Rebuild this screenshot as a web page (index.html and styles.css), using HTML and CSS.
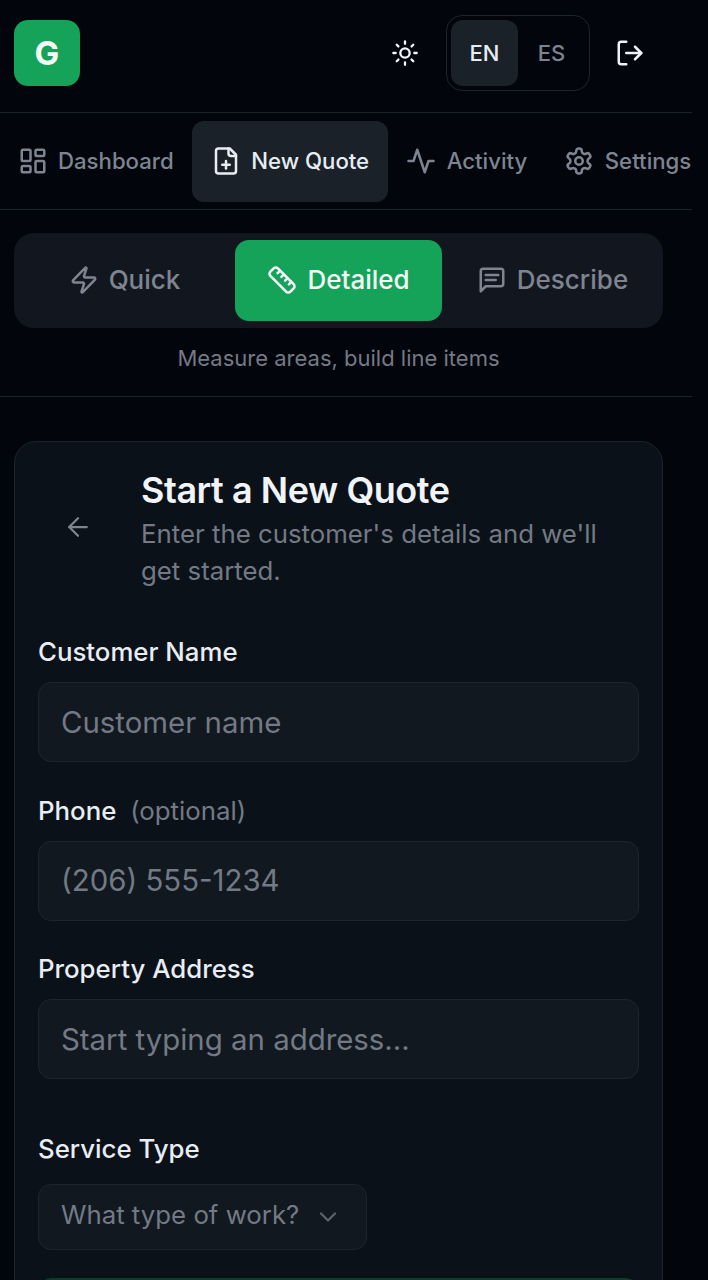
FILE: index.html
```html
<!DOCTYPE html>
<html lang="en">
<head>
<meta charset="utf-8">
<title>New Quote</title>
<link rel="stylesheet" href="styles.css">
</head>
<body>
<div class="page">
  <header class="header">
    <div class="logo">G</div>
    <div class="header-actions">
      <svg class="icon sun" viewBox="0 0 24 24"><circle cx="12" cy="12" r="4"/><path d="M12 2v2M12 20v2M4.93 4.93l1.41 1.41M17.66 17.66l1.41 1.41M2 12h2M20 12h2M6.34 17.66l-1.41 1.41M19.07 4.93l-1.41 1.41"/></svg>
      <div class="lang">
        <span class="lang-btn lang-on">EN</span>
        <span class="lang-btn">ES</span>
      </div>
      <svg class="icon logout" viewBox="0 0 24 24"><path d="M9 21H5a2 2 0 0 1-2-2V5a2 2 0 0 1 2-2h4"/><path d="m16 17 5-5-5-5"/><path d="M21 12H9"/></svg>
    </div>
  </header>
  <nav class="nav">
    <a class="nav-item"><svg class="icon" viewBox="0 0 24 24"><rect x="3" y="3" width="7" height="9" rx="1"/><rect x="14" y="3" width="7" height="5" rx="1"/><rect x="14" y="12" width="7" height="9" rx="1"/><rect x="3" y="16" width="7" height="5" rx="1"/></svg>Dashboard</a>
    <a class="nav-item nav-on"><svg class="icon" viewBox="0 0 24 24"><path d="M15 2H6a2 2 0 0 0-2 2v16a2 2 0 0 0 2 2h12a2 2 0 0 0 2-2V7Z"/><path d="M14 2v4a2 2 0 0 0 2 2h4"/><path d="M9 15h6"/><path d="M12 18v-6"/></svg>New Quote</a>
    <a class="nav-item"><svg class="icon" viewBox="0 0 24 24"><path d="M22 12h-4l-3 9L9 3l-3 9H2"/></svg>Activity</a>
    <a class="nav-item"><svg class="icon" viewBox="0 0 24 24"><path d="M12.22 2h-.44a2 2 0 0 0-2 2v.18a2 2 0 0 1-1 1.73l-.43.25a2 2 0 0 1-2 0l-.15-.08a2 2 0 0 0-2.73.73l-.22.38a2 2 0 0 0 .73 2.73l.15.1a2 2 0 0 1 1 1.72v.51a2 2 0 0 1-1 1.74l-.15.09a2 2 0 0 0-.73 2.73l.22.38a2 2 0 0 0 2.73.73l.15-.08a2 2 0 0 1 2 0l.43.25a2 2 0 0 1 1 1.73V20a2 2 0 0 0 2 2h.44a2 2 0 0 0 2-2v-.18a2 2 0 0 1 1-1.73l.43-.25a2 2 0 0 1 2 0l.15.08a2 2 0 0 0 2.73-.73l.22-.39a2 2 0 0 0-.73-2.73l-.15-.08a2 2 0 0 1-1-1.74v-.5a2 2 0 0 1 1-1.74l.15-.09a2 2 0 0 0 .73-2.73l-.22-.38a2 2 0 0 0-2.73-.73l-.15.08a2 2 0 0 1-2 0l-.43-.25a2 2 0 0 1-1-1.73V4a2 2 0 0 0-2-2z"/><circle cx="12" cy="12" r="3"/></svg>Settings</a>
  </nav>
  <section class="modes">
    <div class="mode-bar">
      <button class="mode"><svg class="icon" viewBox="0 0 24 24"><path d="M4 14a1 1 0 0 1-.78-1.63l9.9-10.2a.5.5 0 0 1 .86.46l-1.92 6.02A1 1 0 0 0 13 10h7a1 1 0 0 1 .78 1.63l-9.9 10.2a.5.5 0 0 1-.86-.46l1.92-6.02A1 1 0 0 0 11 14z"/></svg>Quick</button>
      <button class="mode mode-on"><svg class="icon" viewBox="0 0 24 24"><path d="M21.3 15.3a2.4 2.4 0 0 1 0 3.4l-2.6 2.6a2.4 2.4 0 0 1-3.4 0L2.7 8.7a2.41 2.41 0 0 1 0-3.4l2.6-2.6a2.41 2.41 0 0 1 3.4 0Z"/><path d="m14.5 12.5 2-2"/><path d="m11.5 9.5 2-2"/><path d="m8.5 6.5 2-2"/><path d="m17.5 15.5 2-2"/></svg>Detailed</button>
      <button class="mode"><svg class="icon" viewBox="0 0 24 24"><path d="M21 15a2 2 0 0 1-2 2H7l-4 4V5a2 2 0 0 1 2-2h14a2 2 0 0 1 2 2z"/><path d="M7 8h10M7 12h8"/></svg>Describe</button>
    </div>
    <p class="mode-note">Measure areas, build line items</p>
  </section>
  <main class="main">
    <div class="card">
      <div class="card-head">
        <svg class="icon back" viewBox="0 0 24 24"><path d="m12 19-7-7 7-7"/><path d="M19 12H5"/></svg>
        <div>
          <h1 class="title">Start a New Quote</h1>
          <p class="sub">Enter the customer's details and we'll get started.</p>
        </div>
      </div>
      <div class="field">
        <label class="label">Customer Name</label>
        <div class="input">Customer name</div>
      </div>
      <div class="field">
        <label class="label">Phone <span class="opt">(optional)</span></label>
        <div class="input">(206) 555-1234</div>
      </div>
      <div class="field">
        <label class="label">Property Address</label>
        <div class="input">Start typing an address...</div>
      </div>
      <div class="field field-service">
        <label class="label label-service">Service Type</label>
        <div class="select">What type of work?<svg class="icon chev" viewBox="0 0 24 24"><path d="m6 9 6 6 6-6"/></svg></div>
      </div>
      <div class="submit"></div>
    </div>
  </main>
</div>
</body>
</html>
```
FILE: styles.css
```css
* { box-sizing: border-box; }
html, body { margin: 0; padding: 0; height: 1280px; overflow: hidden; background: #02050c; }
body { font-family: Inter, "Liberation Sans", sans-serif; color: #e8edf4; }
.page { width: 692px; }
.icon { width: 30px; height: 30px; fill: none; stroke: currentColor; stroke-width: 2; stroke-linecap: round; stroke-linejoin: round; flex: none; }

.header { height: 113px; border-bottom: 1px solid #1c2229; padding: 15px 14px 0; display: flex; justify-content: space-between; align-items: flex-start; }
.logo { margin-top: 5px; width: 66px; height: 66px; border-radius: 14px; background: #14a359; color: #f4fbf6; font-weight: 700; font-size: 33px; display: flex; align-items: center; justify-content: center; }
.header-actions { display: flex; align-items: center; height: 76px; margin-right: 33px; }
.sun { width: 28px; height: 28px; color: #f3f5f8; margin-right: 27px; }
.lang { width: 144px; height: 76px; border: 1px solid #1e242c; border-radius: 16px; padding: 4px; display: flex; }
.lang-btn { width: 67px; height: 66px; border-radius: 12px; display: flex; align-items: center; justify-content: center; font-size: 22px; font-weight: 500; color: #7c8490; }
.lang-on { background: #1a2129; color: #e8edf4; }
.logout { margin-left: 25px; color: #eef1f5; }

.nav { height: 97px; border-bottom: 1px solid #1c2229; padding-top: 8px; display: flex; align-items: flex-start; overflow: hidden; white-space: nowrap; }
.nav-item { height: 81px; padding: 0 18.5px 2px; display: flex; align-items: center; gap: 10.5px; font-size: 22.2px; font-weight: 500; color: #7e8591; border-radius: 12px; flex: none; }
.nav-item:first-child { padding-left: 17.5px; }
.nav-on { background: #1a2129; color: #e8edf4; }

.modes { height: 187px; border-bottom: 1px solid #1c2229; padding: 23px 29px 0 14px; }
.mode-bar { height: 95px; border-radius: 20px; background: #12171f; padding: 7px; display: grid; grid-template-columns: repeat(3, 1fr); gap: 7px; align-items: start; }
.mode { height: 81px; border: 0; border-radius: 14px; background: transparent; font-family: inherit; font-size: 26px; font-weight: 500; color: #7e8591; display: flex; align-items: center; justify-content: center; gap: 10px; padding: 0 0 2px; }
.mode-on { background: #14a359; color: #f5fbf7; }
.mode-note { margin: 15px 0 0; text-align: center; font-size: 22px; line-height: 30px; color: #737a85; }

.main { padding: 44px 29px 0 14px; }
.card { height: 900px; background: #0b1118; border: 1px solid #1c232b; border-radius: 22px; padding: 25px 23px 0; }
.card-head { display: flex; align-items: center; margin-bottom: 44px; }
.back { color: #7e8591; margin: -2px 48px 0 25px; stroke-width: 1.8; }
.title { margin: 0 0 2px; font-size: 36px; line-height: 46px; font-weight: 600; color: #f0f3f8; letter-spacing: -0.45px; }
.sub { margin: 0; font-size: 25.8px; line-height: 37px; color: #737a85; }

.field { margin-bottom: 29.6px; }
.label { display: block; font-size: 25.8px; line-height: 38px; font-weight: 500; color: #e8edf4; margin-bottom: 11px; }
.label-service { margin-bottom: 16px; }
.opt { font-weight: 400; color: #737a85; margin-left: 7px; }
.input { height: 80px; background: #12181f; border: 1px solid #1e252d; border-radius: 13px; padding: 0 22px; display: flex; align-items: center; font-size: 29.4px; color: #737a85; }
.field-service { margin-top: 51.1px; margin-bottom: 0; }
.select { width: 329px; height: 66px; background: #12181f; border: 1px solid #1e252d; border-radius: 13px; padding: 0 0 5px 22px; display: flex; align-items: center; font-size: 25.8px; color: #737a85; gap: 15px; }
.chev { width: 28px; height: 28px; margin-top: 5px; color: #59616c; }
.submit { margin-top: 28px; height: 60px; border-radius: 14px; background: #14a359; opacity: .3; }
```
